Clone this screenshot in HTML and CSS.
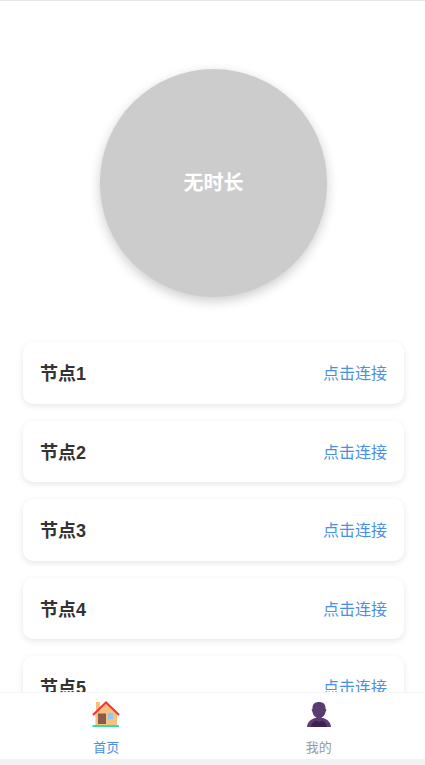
FILE: index.html

```html
<!DOCTYPE html>
<html>
<head>
  <meta charset="UTF-8">
  <title>节点</title>
  <link rel="stylesheet" href="styles.css">
</head>
<body>
  <div class="page">
    <div class="content">
      <div class="circle">无时长</div>
      <div class="node-list">
        <div class="node"><span class="node-name">节点1</span><span class="node-link">点击连接</span></div>
        <div class="node"><span class="node-name">节点2</span><span class="node-link">点击连接</span></div>
        <div class="node"><span class="node-name">节点3</span><span class="node-link">点击连接</span></div>
        <div class="node"><span class="node-name">节点4</span><span class="node-link">点击连接</span></div>
        <div class="node"><span class="node-name">节点5</span><span class="node-link">点击连接</span></div>
      </div>
    </div>
    <div class="tabbar">
      <div class="tab tab-active">
        <svg class="tab-icon" viewBox="0 0 30 30">
          <rect x="5" y="2" width="4" height="9" fill="#f5c27a"/>
          <path d="M4.500 14 L15 4 L26 14 V25 H4.500 Z" fill="#f7c07c"/>
          <rect x="7" y="13.500" width="8" height="10.500" fill="#8a5a4a"/>
          <rect x="17" y="13" width="5" height="6" fill="#8ec8f5"/>
          <path d="M2 15 L15 2.500 L28 15" fill="none" stroke="#f5323a" stroke-width="2.200"/>
          <rect x="1.500" y="25" width="26.500" height="2" fill="#2fe0a0"/>
        </svg>
        <span>首页</span>
      </div>
      <div class="tab">
        <svg class="tab-icon" viewBox="0 0 30 30">
          <path d="M3 27 C3.500 21.500 7 19.500 11 18 H19 C23 19.500 26.500 21.500 27 27 Z" fill="#5c3a72"/>
          <path d="M7 27 C7.500 23 10 21.500 12 20.500 L15 22 L18 20.500 C20 21.500 22.500 23 23 27 Z" fill="#3c2150"/>
          <path d="M8.500 8 C8.500 4 11 2 15 2 C19 2 21.500 4 21.500 8 V9 L22.500 9.500 L21.500 12 C21 15.500 18 18.500 15 18.500 C12 18.500 9 15.500 8.500 12 L7.500 9.500 L8.500 9 Z" fill="#5c3a72"/>
        </svg>
        <span>我的</span>
      </div>
    </div>
    <div class="strip"></div>
  </div>
</body>
</html>
```

FILE: styles.css

```css
* { box-sizing: border-box; }
html, body { margin: 0; padding: 0; }
body {
  font-family: "Liberation Sans", "Noto Sans CJK SC", sans-serif;
  background: #fff;
}
.page {
  height: 765px;
  display: flex;
  flex-direction: column;
  overflow: hidden;
  border-top: 1px solid #e5e5e5;
}
.content {
  flex: 1;
  min-height: 0;
  overflow: hidden;
  padding: 68px 21px 0 23px;
}
.circle {
  width: 227.500px;
  height: 227.500px;
  margin: 0 auto 45.500px;
  padding-bottom: 2px;
  border-radius: 50%;
  background: #ccc;
  color: #fff;
  font-size: 20px;
  font-weight: bold;
  display: flex;
  align-items: center;
  justify-content: center;
  box-shadow: 0 4px 12px rgba(0, 0, 0, 0.2);
}
.node-list {
  display: flex;
  flex-direction: column;
  gap: 17px;
}
.node {
  flex: none;
  height: 61.500px;
  padding: 0 17px 1px;
  display: flex;
  align-items: center;
  justify-content: space-between;
  background: #fff;
  border-radius: 10px;
  box-shadow: 0 2px 6px rgba(0, 0, 0, 0.1);
}
.node-name {
  font-size: 18px;
  font-weight: bold;
  color: #333;
}
.node-link {
  font-size: 16px;
  color: #4a90e2;
}
.tabbar {
  flex: none;
  height: 67px;
  display: flex;
  background: #fff;
  border-top: 1px solid #f5f5f5;
}
.tab {
  flex: 1;
  display: flex;
  flex-direction: column;
  align-items: center;
  padding-top: 7px;
  font-size: 13px;
  color: #999;
}
.tab-active { color: #4a90e2; }
.tab-icon {
  width: 30px;
  height: 30px;
  margin-bottom: 7px;
}
.strip {
  flex: none;
  height: 6px;
  background: #f2f2f2;
}
```
